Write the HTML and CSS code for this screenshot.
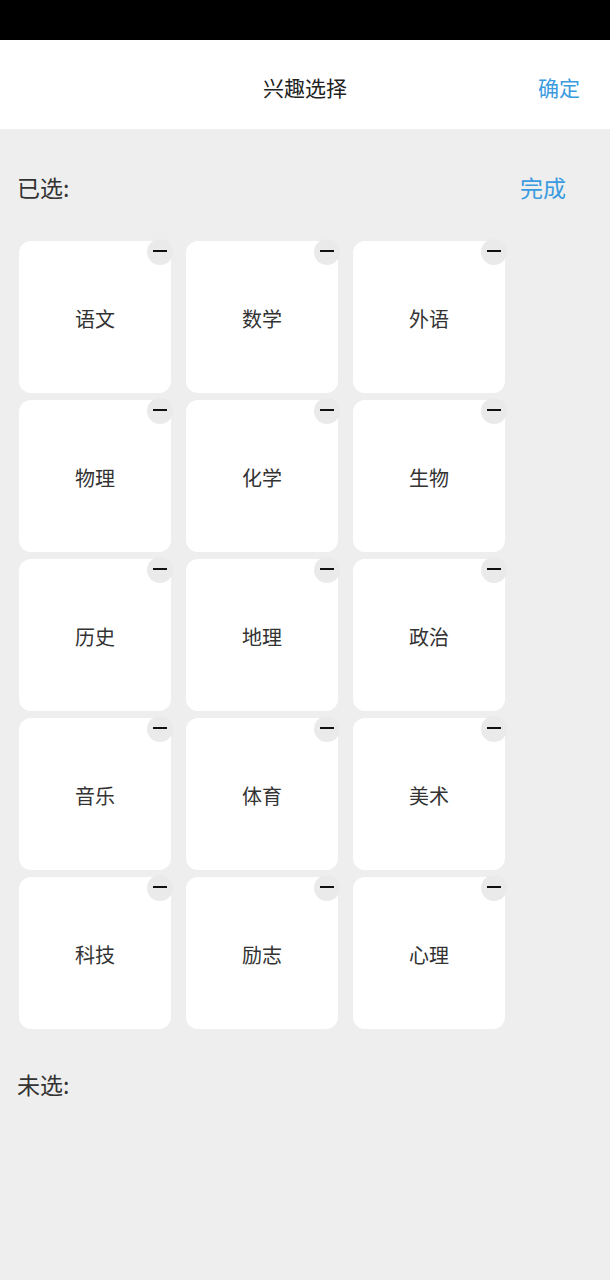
FILE: index.html
```html
<!doctype html>
<html lang="zh-CN">
<head>
	<meta charset="UTF-8">
	<meta name="viewport" content="width=device-width, initial-scale=1.0">
	<title>兴趣选择</title>
	<link rel="stylesheet" href="styles.css">
</head>
<body>
	<div class="status-bar"></div>
	<div class="nav-bar">
		<span></span>
		<span class="nav-title">兴趣选择</span>
		<span class="nav-ok">确定</span>
	</div>
	<div class="section-head">
		<span>已选:</span>
		<span class="done">完成</span>
	</div>
	<ul class="tags">
		<li>语文<i class="del"></i></li>
		<li>数学<i class="del"></i></li>
		<li>外语<i class="del"></i></li>
		<li>物理<i class="del"></i></li>
		<li>化学<i class="del"></i></li>
		<li>生物<i class="del"></i></li>
		<li>历史<i class="del"></i></li>
		<li>地理<i class="del"></i></li>
		<li>政治<i class="del"></i></li>
		<li>音乐<i class="del"></i></li>
		<li>体育<i class="del"></i></li>
		<li>美术<i class="del"></i></li>
		<li>科技<i class="del"></i></li>
		<li>励志<i class="del"></i></li>
		<li>心理<i class="del"></i></li>
	</ul>
	<div class="section-head rest">
		<span>未选:</span>
	</div>
</body>
</html>
```

FILE: styles.css
```css
* {
	margin: 0;
	padding: 0;
}
li {
	list-style: none;
}
body {
	background-color: #eee;
	font-family: "Noto Sans CJK SC", "Noto Sans", sans-serif;
	color: #333;
	min-height: 1280px;
}

.status-bar {
	height: 40px;
	background-color: #000;
}

.nav-bar {
	display: grid;
	grid-template-columns: 1fr auto 1fr;
	align-items: center;
	height: 85px;
	padding-top: 4px;
	background-color: #fff;
	font-size: 21px;
}
.nav-title {
	color: #222;
}
.nav-ok {
	justify-self: end;
	padding-right: 30px;
	color: #3a9be0;
}

.section-head {
	display: flex;
	justify-content: space-between;
	align-items: center;
	height: 108px;
	padding: 4px 44px 0 17px;
	font-size: 23px;
}
.section-head .done {
	color: #3a9be0;
}

.tags {
	display: grid;
	grid-template-columns: repeat(3, 152px);
	grid-auto-rows: 152px;
	gap: 7px 15px;
	padding-left: 19px;
}
.tags li {
	position: relative;
	display: flex;
	justify-content: center;
	align-items: center;
	padding-top: 2px;
	background-color: #fff;
	border-radius: 12px;
	font-size: 20px;
	color: #333;
}
/* 删除按钮，压在卡片右上角 */
.del {
	position: absolute;
	top: -2px;
	right: -2px;
	width: 26px;
	height: 26px;
	border-radius: 50%;
	background-color: #eaeaea;
}
.del::after {
	content: "";
	position: absolute;
	left: 6px;
	top: 11px;
	width: 14px;
	height: 2px;
	background-color: #111;
}

.section-head.rest {
	height: 56px;
	padding-top: 0;
	margin-top: 27px;
}
```
